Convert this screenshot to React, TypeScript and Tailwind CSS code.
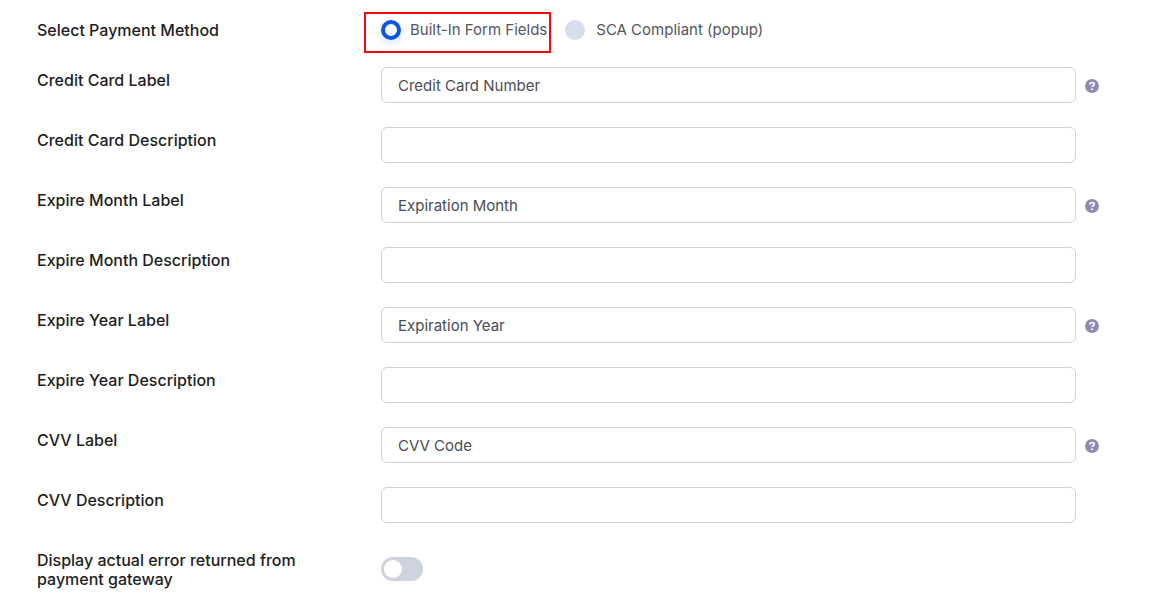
import React, { useState } from 'react';

interface Field {
    id: string;
    label: string;
    value: string;
    help?: string;
}

const FIELDS: Field[] = [
    { id: 'cardLabel', label: 'Credit Card Label', value: 'Credit Card Number', help: 'Label of the card number field' },
    { id: 'cardDescription', label: 'Credit Card Description', value: '' },
    { id: 'monthLabel', label: 'Expire Month Label', value: 'Expiration Month', help: 'Label of the month field' },
    { id: 'monthDescription', label: 'Expire Month Description', value: '' },
    { id: 'yearLabel', label: 'Expire Year Label', value: 'Expiration Year', help: 'Label of the year field' },
    { id: 'yearDescription', label: 'Expire Year Description', value: '' },
    { id: 'cvvLabel', label: 'CVV Label', value: 'CVV Code', help: 'Label of the CVV field' },
    { id: 'cvvDescription', label: 'CVV Description', value: '' },
];

const labelClass = 'w-[344px] shrink-0 pr-12 pt-1 text-base/[19px] font-medium text-[#1d1e22]';
const radioClass =
    'size-5 shrink-0 appearance-none rounded-full bg-[#d9dceb] checked:border-4 checked:border-[#0a56e0] checked:bg-white checked:shadow-[0_4px_8px_rgba(10,86,224,0.15)]';

const HelpIcon: React.FC = () => (
    <svg viewBox="0 0 14 14" className="size-[14px]" aria-hidden="true">
        <circle cx="7" cy="7" r="7" fill="#8e8bb3" />
        <path
            d="M4.8 5.5C4.8 4.2 5.7 3.5 7 3.5s2.2.7 2.2 1.8c0 1.4-2.1 1.4-2.1 2.7"
            fill="none"
            stroke="#fff"
            strokeWidth="1.6"
        />
        <circle cx="7.1" cy="10.2" r="1" fill="#fff" />
    </svg>
);

const App: React.FC = () => {
    const [method, setMethod] = useState('builtin');
    const [values, setValues] = useState<Record<string, string>>(
        Object.fromEntries(FIELDS.map((field) => [field.id, field.value]))
    );
    const [showError, setShowError] = useState(false);

    return (
        <form className="bg-white pt-3 pr-[50px] pl-[37px] font-[Inter,sans-serif]">
            {/* Payment method */}
            <div className="mb-[14px] flex items-center" role="radiogroup" aria-labelledby="methodLabel">
                <div id="methodLabel" className="w-[327px] shrink-0 pb-1 text-base/[19px] font-medium text-[#1d1e22]">
                    Select Payment Method
                </div>
                <div className="flex items-start text-[15px]/5 text-[#53565c]">
                    <label className="flex h-[41px] items-start gap-[9px] border-2 border-[#f00a0f] pt-[6px] pr-[2px] pl-[15px]">
                        <input
                            type="radio"
                            name="method"
                            className={radioClass}
                            checked={method === 'builtin'}
                            onChange={() => setMethod('builtin')}
                        />
                        Built-In Form Fields
                    </label>
                    <label className="ml-[14px] flex items-start gap-[11px] pt-2">
                        <input
                            type="radio"
                            name="method"
                            className={radioClass}
                            checked={method === 'popup'}
                            onChange={() => setMethod('popup')}
                        />
                        SCA Compliant (popup)
                    </label>
                </div>
            </div>

            {/* Field labels and descriptions */}
            <div className="flex flex-col gap-6">
                {FIELDS.map((field) => (
                    <div key={field.id} className="flex items-start">
                        <label htmlFor={field.id} className={labelClass}>
                            {field.label}
                        </label>
                        <input
                            id={field.id}
                            type="text"
                            className="h-9 min-w-0 flex-1 rounded-md border border-[#cfd1d6] px-4 text-[15px]/5 text-[#4a4d53]"
                            value={values[field.id]}
                            onChange={(e) => setValues({ ...values, [field.id]: e.target.value })}
                        />
                        <div className="ml-[9px] w-[14px] pt-3">
                            {field.help && (
                                <button type="button" className="block" aria-label={field.help}>
                                    <HelpIcon />
                                </button>
                            )}
                        </div>
                    </div>
                ))}

                {/* Gateway errors */}
                <div className="flex items-start">
                    <label htmlFor="showError" className={labelClass}>
                        Display actual error returned from payment gateway
                    </label>
                    <input
                        id="showError"
                        type="checkbox"
                        role="switch"
                        className="mt-[10px] h-6 w-[42px] appearance-none rounded-full bg-[#cfd3de] p-[3px] before:block before:size-[18px] before:rounded-full before:bg-white checked:bg-[#0a56e0] checked:before:ml-auto"
                        checked={showError}
                        onChange={(e) => setShowError(e.target.checked)}
                    />
                </div>
            </div>
        </form>
    );
};

export default App;
